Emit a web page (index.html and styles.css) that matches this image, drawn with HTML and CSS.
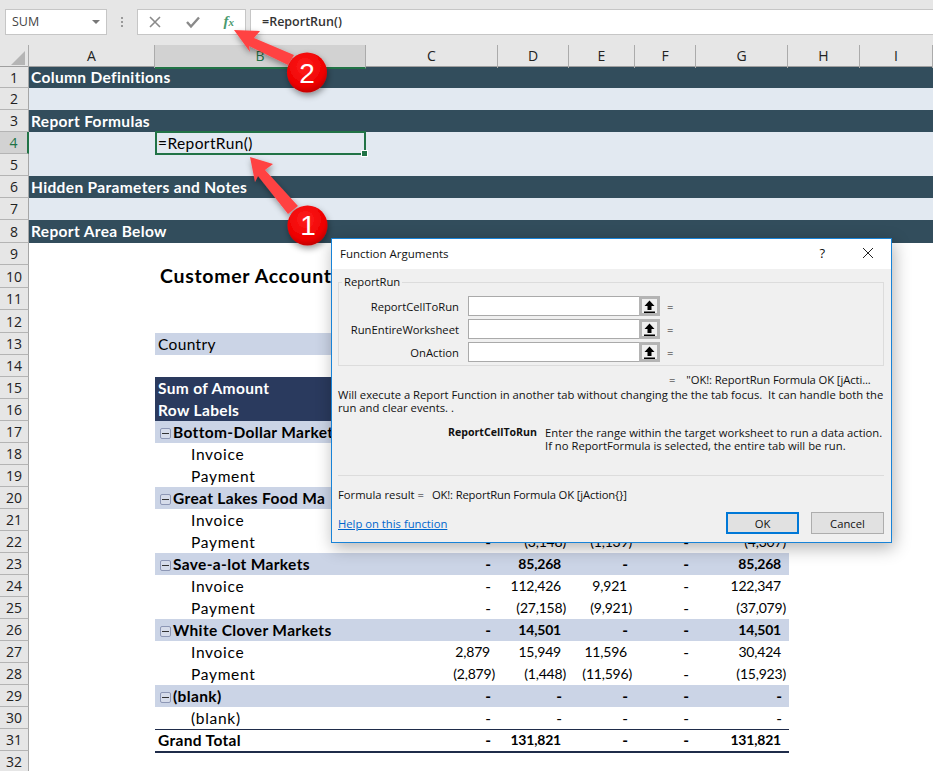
FILE: index.html
```html
<!DOCTYPE html>
<html lang="en">
<head>
    <meta charset="UTF-8">
    <title>Function Arguments</title>
    <link rel="stylesheet" href="styles.css">
</head>
<body>
    <div class="toolbar">
        <div class="namebox"><span>SUM</span><i class="caret"></i></div>
        <div class="grip"></div>
        <div class="fbuttons">
            <svg class="ficon" width="14" height="14" viewBox="0 0 14 14"><path d="M2 2 L12 12 M12 2 L2 12" stroke="#8a8a8a" stroke-width="1.6" fill="none"/></svg>
            <svg class="ficon" width="16" height="14" viewBox="0 0 16 14"><path d="M2 7 L6 11.5 L14 2.5" stroke="#8a8a8a" stroke-width="2.4" fill="none"/></svg>
            <span class="fx">f<small>x</small></span>
        </div>
        <div class="formula">=ReportRun()</div>
    </div>

    <div class="colhead">
        <div class="corner"><i></i></div>
        <div>A</div>
        <div class="selected">B</div>
        <div>C</div>
        <div>D</div>
        <div>E</div>
        <div>F</div>
        <div>G</div>
        <div>H</div>
        <div>I</div>
    </div>

    <div class="sheet">
        <div class="row short section"><div class="rh">1</div><div class="label">Column Definitions</div></div>
        <div class="row light"><div class="rh">2</div></div>
        <div class="row section"><div class="rh">3</div><div class="label">Report Formulas</div></div>
        <div class="row light"><div class="rh active">4</div><div class="colA"></div><div class="selcell">=ReportRun()</div></div>
        <div class="row light"><div class="rh">5</div></div>
        <div class="row section"><div class="rh">6</div><div class="label">Hidden Parameters and Notes</div></div>
        <div class="row light"><div class="rh">7</div></div>
        <div class="row tall section"><div class="rh">8</div><div class="label">Report Area Below</div></div>
        <div class="row"><div class="rh">9</div></div>
        <div class="row tall"><div class="rh">10</div><div class="colA"></div><div class="title">Customer Account</div></div>
        <div class="row"><div class="rh">11</div></div>
        <div class="row tall"><div class="rh">12</div></div>
        <div class="row"><div class="rh">13</div><div class="colA"></div><div class="pivot filter"><div class="txt">Country</div></div></div>
        <div class="row"><div class="rh">14</div></div>
        <div class="row"><div class="rh">15</div><div class="colA"></div><div class="pivot head"><div class="txt">Sum of Amount</div></div></div>
        <div class="row"><div class="rh">16</div><div class="colA"></div><div class="pivot head"><div class="txt">Row Labels</div></div></div>

        <div class="row"><div class="rh">17</div><div class="colA"></div><div class="pivot group"><div class="txt"><i class="minus"></i>Bottom-Dollar Market</div></div></div>
        <div class="row"><div class="rh">18</div><div class="colA"></div><div class="pivot"><div class="sub">Invoice</div></div></div>
        <div class="row"><div class="rh">19</div><div class="colA"></div><div class="pivot"><div class="sub">Payment</div></div></div>
        <div class="row"><div class="rh">20</div><div class="colA"></div><div class="pivot group"><div class="txt"><i class="minus"></i>Great Lakes Food Ma</div></div></div>
        <div class="row"><div class="rh">21</div><div class="colA"></div><div class="pivot"><div class="sub">Invoice</div></div></div>
        <div class="row"><div class="rh">22</div><div class="colA"></div><div class="pivot"><div class="sub">Payment</div><div class="d">-</div><div class="p">(3,148)</div><div class="p">(1,139)</div><div class="d">-</div><div class="p">(4,307)</div></div></div>

        <div class="row"><div class="rh">23</div><div class="colA"></div><div class="pivot group"><div class="txt"><i class="minus"></i>Save-a-lot Markets</div><div class="d">-</div><div class="n">85,268</div><div class="d">-</div><div class="d">-</div><div class="n">85,268</div></div></div>
        <div class="row"><div class="rh">24</div><div class="colA"></div><div class="pivot"><div class="sub">Invoice</div><div class="d">-</div><div class="n">112,426</div><div class="n">9,921</div><div class="d">-</div><div class="n">122,347</div></div></div>
        <div class="row"><div class="rh">25</div><div class="colA"></div><div class="pivot"><div class="sub">Payment</div><div class="d">-</div><div class="p">(27,158)</div><div class="p">(9,921)</div><div class="d">-</div><div class="p">(37,079)</div></div></div>

        <div class="row"><div class="rh">26</div><div class="colA"></div><div class="pivot group"><div class="txt"><i class="minus"></i>White Clover Markets</div><div class="d">-</div><div class="n">14,501</div><div class="d">-</div><div class="d">-</div><div class="n">14,501</div></div></div>
        <div class="row"><div class="rh">27</div><div class="colA"></div><div class="pivot"><div class="sub">Invoice</div><div class="n">2,879</div><div class="n">15,949</div><div class="n">11,596</div><div class="d">-</div><div class="n">30,424</div></div></div>
        <div class="row"><div class="rh">28</div><div class="colA"></div><div class="pivot"><div class="sub">Payment</div><div class="p">(2,879)</div><div class="p">(1,448)</div><div class="p">(11,596)</div><div class="d">-</div><div class="p">(15,923)</div></div></div>

        <div class="row"><div class="rh">29</div><div class="colA"></div><div class="pivot group"><div class="txt"><i class="minus"></i>(blank)</div><div class="d">-</div><div class="d">-</div><div class="d">-</div><div class="d">-</div><div class="d">-</div></div></div>
        <div class="row"><div class="rh">30</div><div class="colA"></div><div class="pivot"><div class="sub">(blank)</div><div class="d">-</div><div class="d">-</div><div class="d">-</div><div class="d">-</div><div class="d">-</div></div></div>
        <div class="row"><div class="rh">31</div><div class="colA"></div><div class="pivot total"><div class="txt">Grand Total</div><div class="d">-</div><div class="n">131,821</div><div class="d">-</div><div class="d">-</div><div class="n">131,821</div></div></div>
        <div class="row"><div class="rh">32</div></div>
    </div>

    <div class="dialog">
        <div class="dlg-title">
            <span>Function Arguments</span>
            <span class="help">?</span>
            <svg width="12" height="12" viewBox="0 0 12 12"><path d="M1 1 L11 11 M11 1 L1 11" stroke="#222" stroke-width="1" fill="none"/></svg>
        </div>
        <div class="dlg-body">
            <fieldset class="group-box">
                <legend>ReportRun</legend>
                <div class="arg"><label>ReportCellToRun</label><div class="arg-input"></div><button class="ref"><svg width="11" height="13" viewBox="0 0 11 13"><path d="M5.5 0.5 L10.5 6 L7.5 6 L7.5 10 L3.5 10 L3.5 6 L0.5 6 Z M0 11.5 H11 V13 H0 Z" fill="#000"/></svg></button><span class="eq">=</span></div>
                <div class="arg"><label>RunEntireWorksheet</label><div class="arg-input"></div><button class="ref"><svg width="11" height="13" viewBox="0 0 11 13"><path d="M5.5 0.5 L10.5 6 L7.5 6 L7.5 10 L3.5 10 L3.5 6 L0.5 6 Z M0 11.5 H11 V13 H0 Z" fill="#000"/></svg></button><span class="eq">=</span></div>
                <div class="arg"><label>OnAction</label><div class="arg-input"></div><button class="ref"><svg width="11" height="13" viewBox="0 0 11 13"><path d="M5.5 0.5 L10.5 6 L7.5 6 L7.5 10 L3.5 10 L3.5 6 L0.5 6 Z M0 11.5 H11 V13 H0 Z" fill="#000"/></svg></button><span class="eq">=</span></div>
            </fieldset>
            <div class="result-line"><span class="eq">=</span><span>"OK!: ReportRun Formula OK [jActi...</span></div>
            <p class="desc">Will execute a Report Function in another tab without changing the the tab focus.&nbsp; It can handle both the run and clear events. .</p>
            <div class="arg-help">
                <b>ReportCellToRun</b>
                <p>Enter the range within the target worksheet to run a data action.<br>If no ReportFormula is selected, the entire tab will be run.</p>
            </div>
            <div class="formula-result"><span>Formula result =</span><span class="value">OK!: ReportRun Formula OK [jAction{}]</span></div>
            <div class="dlg-foot">
                <a href="#">Help on this function</a>
                <button class="btn default">OK</button>
                <button class="btn">Cancel</button>
            </div>
        </div>
    </div>

    <svg class="callouts" width="933" height="771" viewBox="0 0 933 771">
        <defs>
            <radialGradient id="ball" cx="45%" cy="35%" r="70%">
                <stop offset="0" stop-color="#ff1f1f"/>
                <stop offset="0.7" stop-color="#ee0000"/>
                <stop offset="1" stop-color="#b80000"/>
            </radialGradient>
            <filter id="drop" x="-30%" y="-30%" width="160%" height="160%">
                <feDropShadow dx="1" dy="3" stdDeviation="3" flood-color="#000" flood-opacity="0.4"/>
            </filter>
        </defs>
        <g filter="url(#drop)">
            <path d="M234 30 L260 31 L254 38 L294 55 L288 65 L249 46 L250 52 Z" fill="#ff4343"/>
            <path d="M250 157 L273 164 L265 170 L298 206 L288 214 L258 176 L255 182 Z" fill="#ff4343"/>
            <circle cx="307" cy="72.5" r="20" fill="url(#ball)"/>
            <circle cx="307.5" cy="225.5" r="20" fill="url(#ball)"/>
        </g>
        <text class="badge" x="307" y="83">2</text>
        <text class="badge" x="308" y="235">1</text>
    </svg>
</body>
</html>
```

FILE: styles.css
```css
* {
    box-sizing: border-box;
}
html, body {
    margin: 0;
    padding: 0;
}
body {
    position: relative;
    width: 933px;
    height: 771px;
    overflow: hidden;
    background: white;
    color: black;
    font-family: "Lato", sans-serif;
    font-size: 15.5px;
}

/* formula bar */
.toolbar {
    display: flex;
    align-items: center;
    height: 45px;
    padding: 0 0 2px 5px;
    background: #e6e6e6;
    font-family: "Open Sans", sans-serif;
}
.namebox {
    display: flex;
    align-items: center;
    justify-content: space-between;
    width: 102px;
    height: 26px;
    padding: 0 6px 0 6px;
    background: white;
    border: 1px solid #c6c6c6;
    font-size: 12.5px;
    color: #444;
}
.caret {
    border-left: 4px solid transparent;
    border-right: 4px solid transparent;
    border-top: 4px solid #777;
}
.grip {
    width: 2px;
    height: 10px;
    margin: 0 14px 0 14px;
    border-left: 2px dotted #999;
}
.fbuttons {
    display: flex;
    align-items: center;
    justify-content: space-between;
    width: 109px;
    height: 26px;
    padding: 0 11px 0 10px;
    background: white;
    border: 1px solid #c6c6c6;
}
.fx {
    font: italic bold 15px "Liberation Serif", serif;
    color: #4a9a6e;
}
.fx small {
    font-size: 11px;
}
.formula {
    flex: 1;
    height: 26px;
    margin-left: 4px;
    padding-left: 11px;
    line-height: 24px;
    background: white;
    border-top: 1px solid #c6c6c6;
    border-bottom: 1px solid #c6c6c6;
    border-left: 1px solid #c6c6c6;
    font-size: 12.5px;
    font-weight: 600;
    color: #333;
}

/* column letters */
.colhead {
    display: grid;
    grid-template-columns: 29px 126px 211px 132px 71px 66px 61px 92px 72px 73px;
    height: 22px;
    background: #e6e6e6;
    border-bottom: 1px solid #9f9f9f;
    font-family: "Open Sans", sans-serif;
    font-size: 14px;
}
.colhead div {
    line-height: 22px;
    text-align: center;
    border-right: 1px solid #ababab;
    color: #222;
}
.colhead .selected {
    margin-bottom: -1px;
    background: #d2d2d2;
    border-bottom: 2px solid #217346;
    color: #217346;
}
.corner {
    position: relative;
}
.corner i {
    position: absolute;
    right: 3px;
    bottom: 3px;
    border-left: 14px solid transparent;
    border-bottom: 14px solid #b5b5b5;
}

/* sheet */
.row {
    display: flex;
    height: 22px;
    line-height: 22px;
}
.row.short {
    height: 21px;
    line-height: 21px;
}
.row.tall {
    height: 23px;
    line-height: 23px;
}
.rh {
    flex: none;
    width: 29px;
    background: #e6e6e6;
    border-right: 1px solid #a6a6a6;
    border-bottom: 1px solid #b4b4b4;
    text-align: center;
    font-family: "Open Sans", sans-serif;
    font-size: 14px;
    font-weight: 400;
    letter-spacing: 0;
    color: #222;
}
.rh.active {
    background: #d2d2d2;
    border-right: 2px solid #217346;
    color: #217346;
}
.colA {
    flex: none;
    width: 126px;
}
.section {
    background: #324d5c;
    color: white;
    font-weight: 700;
    letter-spacing: 0.35px;
}
.section .label {
    padding-left: 2px;
}
.light {
    background: #e2e9f1;
}
.selcell {
    position: relative;
    width: 211px;
    height: 24px;
    margin-top: -1px;
    padding-left: 1px;
    line-height: 20px;
    letter-spacing: 0.4px;
    border: 2px solid #217346;
}
.selcell::after {
    content: "";
    position: absolute;
    right: -4px;
    bottom: -4px;
    width: 5px;
    height: 5px;
    background: #217346;
    border: 1px solid white;
}
.title {
    padding-left: 5px;
    font-size: 19.5px;
    font-weight: 700;
    line-height: 22px;
    letter-spacing: 0.7px;
    white-space: nowrap;
}

/* pivot table */
.pivot {
    display: grid;
    grid-template-columns: 211px 132px 71px 66px 61px 93px;
    width: 634px;
    text-align: right;
    white-space: nowrap;
}
.pivot .txt {
    padding-left: 3px;
    text-align: left;
    letter-spacing: 0.35px;
}
.pivot .sub {
    padding-left: 36px;
    text-align: left;
    letter-spacing: 0.7px;
}
.pivot .n {
    padding-right: 8px;
    font-size: 14px;
    letter-spacing: -0.2px;
}
.pivot .p {
    padding-right: 3px;
    font-size: 14px;
    letter-spacing: -0.2px;
}
.pivot .d {
    padding-right: 7px;
}
.filter {
    background: #cbd4e6;
}
.head {
    background: #2a3a5e;
    color: white;
    font-weight: 700;
}
.group {
    background: #cbd4e6;
    font-weight: 700;
}
.group .txt {
    padding-left: 5px;
}
.total {
    height: 22px;
    line-height: 20px;
    border-top: 1px solid #1f2c4a;
    box-shadow: 0 2px 0 #1f2c4a;
    font-weight: 700;
}
.minus {
    display: inline-block;
    position: relative;
    width: 11px;
    height: 11px;
    margin-right: 2px;
    vertical-align: -1px;
    background: #d6dcea;
    border: 1px solid #8d97b5;
    border-radius: 2px;
}
.minus::after {
    content: "";
    position: absolute;
    left: 1px;
    right: 1px;
    top: 4px;
    height: 1px;
    background: #333;
}

/* dialog over the sheet */
.dialog {
    position: absolute;
    left: 331px;
    top: 238px;
    width: 561px;
    height: 305px;
    background: #f0f0f0;
    border: 1px solid #1883d7;
    box-shadow: 2px 5px 16px rgba(0, 0, 0, 0.3);
    font-family: "Open Sans", sans-serif;
    font-size: 11.25px;
    color: #111;
}
.dlg-title {
    display: flex;
    align-items: center;
    height: 30px;
    padding: 0 17px 2px 8px;
    background: white;
    font-size: 11.5px;
}
.dlg-title span:first-child {
    flex: 1;
}
.dlg-title .help {
    margin-right: 37px;
    font-size: 13px;
}
.dlg-body {
    padding: 0 7px 0 6px;
}
.group-box {
    height: 89px;
    margin: 8px 0 0;
    padding: 9px 0 0;
    border: 1px solid #dcdcdc;
}
.group-box legend {
    margin-left: 3px;
    padding: 0 2px;
    line-height: 10px;
}
.arg {
    display: flex;
    align-items: center;
    height: 20px;
    margin-bottom: 3px;
}
.arg label {
    width: 129px;
    padding-right: 9px;
    text-align: right;
    white-space: nowrap;
}
.arg-input {
    width: 171px;
    height: 20px;
    background: white;
    border: 1px solid #aaa;
    border-right: none;
}
.ref {
    display: flex;
    align-items: center;
    justify-content: center;
    width: 21px;
    height: 20px;
    padding: 0;
    background: #f0f0f0;
    border: 3px solid #b4b4b4;
}
.eq {
    margin-left: 7px;
}
.result-line {
    display: flex;
    height: 15px;
    padding-left: 325px;
    margin-top: 6px;
    line-height: 15px;
    letter-spacing: -0.1px;
    white-space: nowrap;
}
.result-line .eq {
    margin: 0 11px 0 6px;
}
.desc {
    margin: 1px -3px 0 0;
    line-height: 13px;
}
.arg-help {
    display: flex;
    margin-top: 12px;
    height: 43px;
    line-height: 13px;
}
.arg-help b {
    width: 199px;
    font-size: 10.6px;
    text-align: right;
}
.arg-help p {
    margin: 0 0 0 8px;
}
.formula-result {
    display: flex;
    gap: 8px;
    height: 40px;
    margin-top: 6px;
    padding-top: 11px;
    border-top: 1px solid #dcdcdc;
}
.formula-result .value {
    letter-spacing: -0.15px;
}
.dlg-foot {
    display: flex;
    align-items: center;
    gap: 12px;
    height: 22px;
    margin-top: -3px;
}
.dlg-foot a {
    flex: 1;
    color: #0066cc;
}
.btn {
    width: 73px;
    height: 22px;
    padding: 0;
    background: #e1e1e1;
    border: 1px solid #adadad;
    font: inherit;
    color: #111;
}
.btn.default {
    border: 2px solid #0078d7;
}

/* red arrows and numbers */
.callouts {
    position: absolute;
    left: 0;
    top: 0;
}
.badge {
    fill: white;
    font-family: "Liberation Sans", sans-serif;
    font-size: 28px;
    text-anchor: middle;
}
```
